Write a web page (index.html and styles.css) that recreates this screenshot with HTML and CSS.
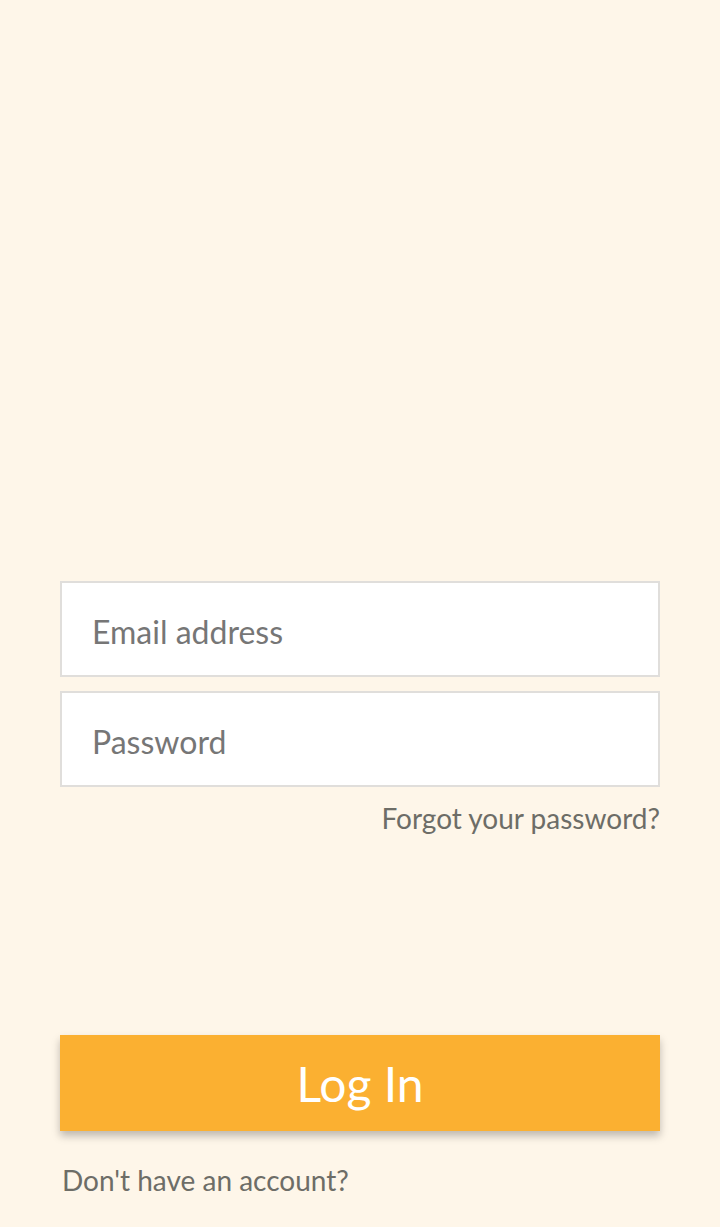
FILE: index.html
```html
<!DOCTYPE html>
<html>
<head>
<meta charset="utf-8">
<link rel="stylesheet" href="styles.css">
</head>
<body>
<main class="screen">
  <form class="login">
    <input class="field" type="email" placeholder="Email address">
    <input class="field" type="password" placeholder="Password">
    <div class="forgot-row"><a class="forgot" href="#">Forgot your password?</a></div>
    <button class="btn" type="button">Log In</button>
    <a class="signup" href="#">Don't have an account?</a>
  </form>
</main>
</body>
</html>
```
FILE: styles.css
```css
html, body {
  margin: 0;
  padding: 0;
  background: #fef6e9;
}
.screen {
  height: 1227px;
  box-sizing: border-box;
  padding: 581px 60px 0;
  font-family: Lato, "Open Sans", sans-serif;
}
.login {
  display: flex;
  flex-direction: column;
}
.field {
  box-sizing: border-box;
  height: 96px;
  width: 100%;
  border: 2px solid #e0dedb;
  background: #fff;
  padding: 4px 30px 0;
  font-family: Lato, sans-serif;
  font-size: 32px;
  color: #333;
  outline: none;
  margin: 0 0 14px;
}
.field::placeholder {
  color: #767676;
}
.forgot-row {
  display: flex;
  justify-content: flex-end;
  margin-top: 0;
}
.forgot {
  font-size: 28px;
  color: #6d6d67;
  text-decoration: none;
  line-height: 34px;
}
.btn {
  margin-top: 200px;
  height: 96px;
  width: 100%;
  border: none;
  background: #fbb031;
  color: #fff;
  font-family: Lato, sans-serif;
  font-size: 48px;
  box-shadow: 0 5px 8px rgba(0, 0, 0, 0.25);
  padding: 0;
}
.signup {
  margin-top: 32px;
  padding-left: 2px;
  font-size: 28px;
  color: #6d6d67;
  text-decoration: none;
  line-height: 34px;
}
```
